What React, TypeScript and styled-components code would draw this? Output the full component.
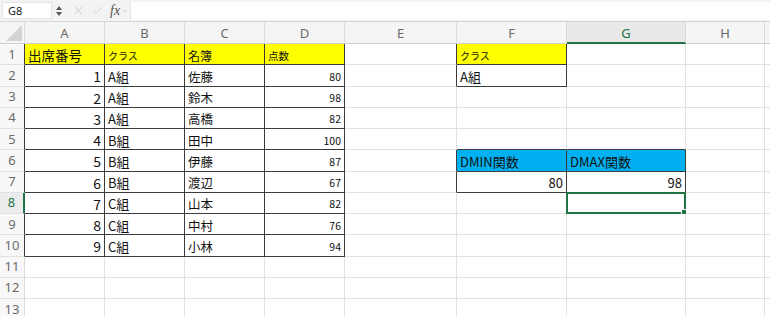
import React from "react";
import styled, { createGlobalStyle } from "styled-components";
import { X, Check, ChevronDown } from "lucide-react";

const GlobalStyle = createGlobalStyle`
  html, body {
    margin: 0;
    padding: 0;
    background: #fff;
    overflow: hidden;
  }
  body {
    font-family: "Noto Sans CJK JP", "Noto Sans", sans-serif;
  }
`;

const GREEN = "#217346";
const DARK = "#3c3c3c";
const GRID = "#e1e1e1";

const FormulaBar = styled.div`
  display: flex;
  align-items: center;
  height: 22px;
  box-sizing: border-box;
  padding-left: 2px;
  background: #f3f3f3;
  border-bottom: 1px solid #d6d6d6;
`;

const NameBox = styled.div`
  width: 50px;
  height: 17px;
  box-sizing: border-box;
  background: #fff;
  border: 1px solid #e4e4e4;
  font-family: "Noto Sans", sans-serif;
  font-size: 11px;
  color: #222;
  line-height: 15px;
  padding-left: 5px;
`;

const Spinner = styled.svg`
  margin-left: 4px;
`;

const BarIcons = styled.div`
  display: flex;
  align-items: center;
  gap: 6px;
  margin-left: 10px;
  color: #c2c2c2;
`;

const Fx = styled.span`
  font-family: "Liberation Serif", serif;
  font-style: italic;
  font-size: 14px;
  color: #555;
`;

const FormulaInput = styled.div`
  flex: 1;
  height: 18px;
  background: #fff;
  border-left: 1px solid #e4e4e4;
`;

const Sheet = styled.div`
  display: grid;
  grid-template-columns: 25px 80px 80px 80px 80px 112px 110px 119px 79px 1fr;
  grid-template-rows: 22px repeat(13, 21.25px);
`;

const Corner = styled.div`
  background: #f5f5f5;
  border-right: 1px solid #dadada;
  border-bottom: 1px solid #cfcfcf;
  box-sizing: border-box;
  display: flex;
  align-items: flex-end;
  justify-content: flex-end;
  padding: 0 2px 2px 0;
`;

const ColHead = styled.div<{ $sel?: boolean }>`
  box-sizing: border-box;
  display: flex;
  align-items: center;
  justify-content: center;
  background: ${(p) => (p.$sel ? "#e8e8e8" : "#f5f5f5")};
  border-right: 1px solid #dadada;
  border-bottom: ${(p) => (p.$sel ? `2px solid ${GREEN}` : "1px solid #cfcfcf")};
  color: ${(p) => (p.$sel ? GREEN : "#6a6a6a")};
  font-family: "Noto Sans", sans-serif;
  font-size: 13px;
  padding-top: ${(p) => (p.$sel ? "1px" : "0")};
`;

const RowHead = styled.div<{ $sel?: boolean; $rDark?: boolean }>`
  box-sizing: border-box;
  display: flex;
  align-items: center;
  justify-content: center;
  background: ${(p) => (p.$sel ? "#ececec" : "#f8f8f8")};
  border-right: ${(p) =>
    p.$sel ? `2px solid ${GREEN}` : `1px solid ${p.$rDark ? DARK : "#dadada"}`};
  border-bottom: 1px solid ${GRID};
  color: ${(p) => (p.$sel ? GREEN : "#6a6a6a")};
  font-family: "Noto Sans", sans-serif;
  font-size: 13px;
  line-height: 1;
`;

const Cell = styled.div<{
  $bg?: string;
  $align?: "left" | "right";
  $fs?: number;
  $rDark?: boolean;
  $bDark?: boolean;
}>`
  position: relative;
  box-sizing: border-box;
  display: flex;
  align-items: center;
  justify-content: ${(p) => (p.$align === "right" ? "flex-end" : "flex-start")};
  padding: 2px 3px 0 3px;
  white-space: nowrap;
  background: ${(p) => p.$bg || "#fff"};
  border-right: 1px solid ${(p) => (p.$rDark ? DARK : GRID)};
  border-bottom: 1px solid ${(p) => (p.$bDark ? DARK : GRID)};
  font-size: ${(p) => p.$fs || 13}px;
  color: #111;
`;

const SelectionFrame = styled.div`
  position: absolute;
  top: -1px;
  left: -1px;
  right: -1px;
  bottom: -1px;
  border: 2px solid ${GREEN};
  pointer-events: none;
`;

const Handle = styled.div`
  position: absolute;
  right: -4px;
  bottom: -4px;
  width: 5px;
  height: 5px;
  background: ${GREEN};
  border: 1px solid #fff;
`;

type Val = { t: string; align?: "left" | "right"; fs?: number; bg?: string };

const YELLOW = "#ffff00";
const BLUE = "#00b0f0";

const cols = ["A", "B", "C", "D", "E", "F", "G", "H", "I"];

const students = [
  [1, "A組", "佐藤", 80],
  [2, "A組", "鈴木", 98],
  [3, "A組", "高橋", 82],
  [4, "B組", "田中", 100],
  [5, "B組", "伊藤", 87],
  [6, "B組", "渡辺", 67],
  [7, "C組", "山本", 82],
  [8, "C組", "中村", 76],
  [9, "C組", "小林", 94],
] as const;

const data: Record<string, Val> = {
  "1,1": { t: "出席番号", fs: 13.5, bg: YELLOW },
  "1,2": { t: "クラス", fs: 10, bg: YELLOW },
  "1,3": { t: "名簿", fs: 12, bg: YELLOW },
  "1,4": { t: "点数", fs: 10.5, bg: YELLOW },
  "1,6": { t: "クラス", fs: 10, bg: YELLOW },
  "2,6": { t: "A組", fs: 13 },
  "6,6": { t: "DMIN関数", fs: 13, bg: BLUE },
  "6,7": { t: "DMAX関数", fs: 13, bg: BLUE },
  "7,6": { t: "80", fs: 13, align: "right" },
  "7,7": { t: "98", fs: 13, align: "right" },
};

students.forEach(([n, cls, name, score], i) => {
  const r = i + 2;
  data[`${r},1`] = { t: String(n), fs: 14, align: "right" };
  data[`${r},2`] = { t: cls, fs: 13 };
  data[`${r},3`] = { t: name, fs: 12.5 };
  data[`${r},4`] = { t: String(score), fs: 10.5, align: "right" };
});

// bordered ranges: [top, left, bottom, right]
const boxes = [
  [1, 1, 10, 4],
  [1, 6, 2, 6],
  [6, 6, 7, 7],
];

const inBox = (r: number, c: number) =>
  boxes.some(([t, l, b, rr]) => r >= t && r <= b && c >= l && c <= rr);

const SEL = { r: 8, c: 7 };

export default function App() {
  const rows = Array.from({ length: 13 }, (_, i) => i + 1);
  return (
    <>
      <GlobalStyle />
      <FormulaBar>
        <NameBox>G8</NameBox>
        <Spinner width="6" height="12" viewBox="0 0 6 12">
          <path d="M3 1 L6 5 L0 5 Z" fill="#555" />
          <path d="M3 11 L6 7 L0 7 Z" fill="#555" />
        </Spinner>
        <BarIcons>
          <X size={13} strokeWidth={1.5} />
          <Check size={13} strokeWidth={1.5} />
          <Fx>fx</Fx>
        </BarIcons>
        <ChevronDown size={8} color="#bbb" strokeWidth={2} style={{ margin: "0 1px" }} />
        <FormulaInput />
      </FormulaBar>
      <Sheet>
        <Corner>
          <svg width="16" height="16" viewBox="0 0 16 16">
            <path d="M16 0 L16 16 L0 16 Z" fill="#d4d4d4" />
          </svg>
        </Corner>
        {cols.map((c, i) => (
          <ColHead key={c} $sel={i + 1 === SEL.c}>
            {c === "I" ? "" : c}
          </ColHead>
        ))}
        {rows.map((r) => (
          <React.Fragment key={r}>
            <RowHead $sel={r === SEL.r} $rDark={inBox(r, 1)}>
              {r}
            </RowHead>
            {cols.map((_, ci) => {
              const c = ci + 1;
              const v = data[`${r},${c}`];
              const sel = r === SEL.r && c === SEL.c;
              return (
                <Cell
                  key={c}
                  $bg={v?.bg}
                  $align={v?.align}
                  $fs={v?.fs}
                  $rDark={inBox(r, c) || inBox(r, c + 1)}
                  $bDark={inBox(r, c) || inBox(r + 1, c)}
                >
                  {v?.t}
                  {sel && (
                    <SelectionFrame>
                      <Handle />
                    </SelectionFrame>
                  )}
                </Cell>
              );
            })}
          </React.Fragment>
        ))}
      </Sheet>
    </>
  );
}
